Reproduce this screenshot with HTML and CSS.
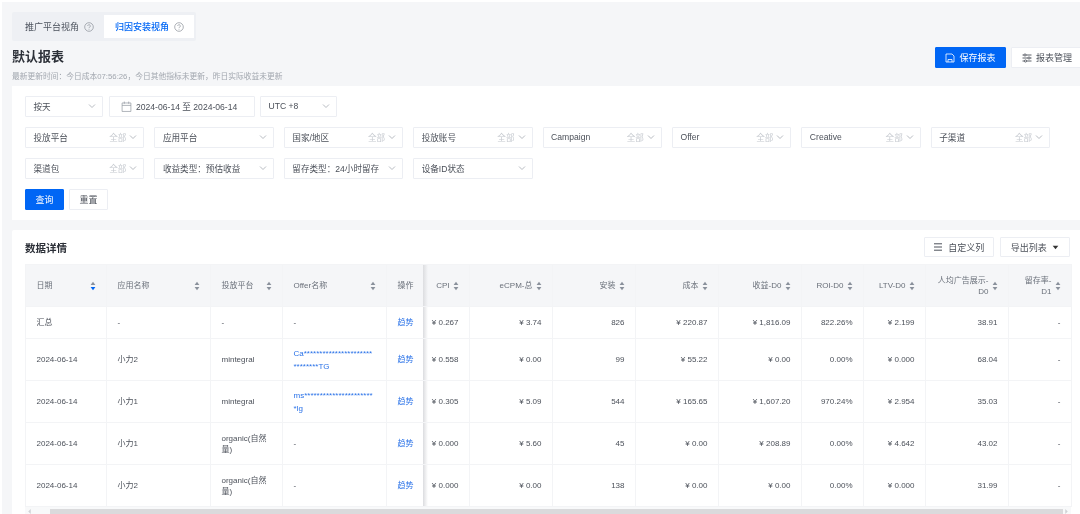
FILE: index.html
```html
<!DOCTYPE html>
<html lang="zh-CN">
<head>
<meta charset="utf-8">
<title>默认报表</title>
<link rel="stylesheet" href="styles.css">
</head>
<body>
<svg class="defs" width="0" height="0">
  <symbol id="chev" viewBox="0 0 8 8"><path d="M1 2.5 4 5.5 7 2.5" fill="none" stroke="currentColor" stroke-width=".8"/></symbol>
  <symbol id="sort" viewBox="0 0 6 10"><path d="M3 .8 5.4 4H.6Z" fill="currentColor"/><path d="M3 9.2 5.4 6H.6Z" fill="currentColor"/></symbol>
  <symbol id="sort-down" viewBox="0 0 6 10"><path d="M3 .8 5.4 4H.6Z" fill="#8a919c"/><path d="M3 9.2 5.4 6H.6Z" fill="#0066f5"/></symbol>
  <symbol id="help" viewBox="0 0 10 10"><circle cx="5" cy="5" r="4.3" fill="none" stroke="currentColor" stroke-width=".7"/><path d="M3.7 4a1.3 1.3 0 1 1 2 1.1c-.5.3-.7.5-.7 1" fill="none" stroke="currentColor" stroke-width=".7"/><circle cx="5" cy="7.3" r=".45" fill="currentColor"/></symbol>
</svg>
<div class="page">
  <div class="tabs">
    <div class="tab">推广平台视角<svg class="help"><use href="#help"/></svg></div>
    <div class="tab tab-active">归因安装视角<svg class="help"><use href="#help"/></svg></div>
  </div>
  <header class="head">
    <div>
      <h1 class="title">默认报表</h1>
      <p class="note">最新更新时间：今日成本07:56:26，今日其他指标未更新，昨日实际收益未更新</p>
    </div>
    <div class="head-actions">
      <button class="btn btn-primary btn-save">
        <svg class="ico" viewBox="0 0 10 10"><path d="M1 1h6l2 2v6H1Z M3 9V6.5h4V9" fill="none" stroke="currentColor" stroke-width=".8"/></svg>保存报表
      </button>
      <button class="btn btn-manage">
        <svg class="ico" viewBox="0 0 10 10"><path d="M.5 2h9M.5 5h9M.5 8h9" stroke="currentColor" stroke-width=".9"/><circle cx="3" cy="2" r="1.1" fill="#fff" stroke="currentColor" stroke-width=".8"/><circle cx="7" cy="5" r="1.1" fill="#fff" stroke="currentColor" stroke-width=".8"/><circle cx="3.5" cy="8" r="1.1" fill="#fff" stroke="currentColor" stroke-width=".8"/></svg>报表管理
      </button>
    </div>
  </header>

  <section class="filters">
    <div class="filter-row">
      <div class="sel sel-day"><span class="sel-label">按天</span><svg class="chev"><use href="#chev"/></svg></div>
      <div class="sel sel-date">
        <svg class="cal" viewBox="0 0 10 10"><path d="M1 1.8h8v7.7H1ZM1 4h8M3 .5v2M7 .5v2" fill="none" stroke="currentColor" stroke-width=".6"/></svg>
        <span class="sel-label">2024-06-14 至 2024-06-14</span>
      </div>
      <div class="sel sel-utc"><span class="sel-label">UTC +8</span><svg class="chev"><use href="#chev"/></svg></div>
    </div>
    <div class="filter-row">
      <div class="sel sel-f"><span class="sel-label">投放平台</span><span class="sel-all">全部</span><svg class="chev"><use href="#chev"/></svg></div>
      <div class="sel sel-f"><span class="sel-label">应用平台</span><svg class="chev"><use href="#chev"/></svg></div>
      <div class="sel sel-f"><span class="sel-label">国家/地区</span><span class="sel-all">全部</span><svg class="chev"><use href="#chev"/></svg></div>
      <div class="sel sel-f"><span class="sel-label">投放账号</span><span class="sel-all">全部</span><svg class="chev"><use href="#chev"/></svg></div>
      <div class="sel sel-f"><span class="sel-label">Campaign</span><span class="sel-all">全部</span><svg class="chev"><use href="#chev"/></svg></div>
      <div class="sel sel-f"><span class="sel-label">Offer</span><span class="sel-all">全部</span><svg class="chev"><use href="#chev"/></svg></div>
      <div class="sel sel-f"><span class="sel-label">Creative</span><span class="sel-all">全部</span><svg class="chev"><use href="#chev"/></svg></div>
      <div class="sel sel-f"><span class="sel-label">子渠道</span><span class="sel-all">全部</span><svg class="chev"><use href="#chev"/></svg></div>
    </div>
    <div class="filter-row">
      <div class="sel sel-f"><span class="sel-label">渠道包</span><span class="sel-all">全部</span><svg class="chev"><use href="#chev"/></svg></div>
      <div class="sel sel-f"><span class="sel-label">收益类型：预估收益</span><svg class="chev"><use href="#chev"/></svg></div>
      <div class="sel sel-f"><span class="sel-label">留存类型：24小时留存</span><svg class="chev"><use href="#chev"/></svg></div>
      <div class="sel sel-f"><span class="sel-label">设备ID状态</span><svg class="chev"><use href="#chev"/></svg></div>
    </div>
    <div class="filter-row filter-btns">
      <button class="btn btn-primary btn-q">查询</button>
      <button class="btn btn-q">重置</button>
    </div>
  </section>

  <section class="card">
    <div class="card-head">
      <h2 class="card-title">数据详情</h2>
      <div class="card-actions">
        <button class="btn btn-tool">
          <svg class="ico" viewBox="0 0 10 10"><path d="M1 1.8h8M1 5h8M1 8.2h8" stroke="currentColor" stroke-width="1"/></svg>自定义列
        </button>
        <button class="btn btn-tool">导出列表<svg class="caret" viewBox="0 0 8 8"><path d="M.8 2h6.4L4 6Z" fill="currentColor"/></svg></button>
      </div>
    </div>
    <div class="table-wrap">
      <table class="data">
        <colgroup>
          <col class="c-date"><col class="c-app"><col class="c-plat"><col class="c-offer"><col class="c-op">
          <col class="c-cpi"><col class="c-ecpm"><col class="c-inst"><col class="c-cost"><col class="c-rev">
          <col class="c-roi"><col class="c-ltv"><col class="c-ad"><col class="c-ret">
        </colgroup>
        <thead>
          <tr>
            <th><div class="th"><span>日期</span><svg class="sort"><use href="#sort-down"/></svg></div></th>
            <th><div class="th"><span>应用名称</span><svg class="sort"><use href="#sort"/></svg></div></th>
            <th><div class="th"><span>投放平台</span><svg class="sort"><use href="#sort"/></svg></div></th>
            <th><div class="th"><span>Offer名称</span><svg class="sort"><use href="#sort"/></svg></div></th>
            <th class="op"><div class="th"><span>操作</span></div></th>
            <th class="num"><div class="th"><span>CPI</span><svg class="sort"><use href="#sort"/></svg></div></th>
            <th class="num"><div class="th"><span>eCPM-总</span><svg class="sort"><use href="#sort"/></svg></div></th>
            <th class="num"><div class="th"><span>安装</span><svg class="sort"><use href="#sort"/></svg></div></th>
            <th class="num"><div class="th"><span>成本</span><svg class="sort"><use href="#sort"/></svg></div></th>
            <th class="num"><div class="th"><span>收益-D0</span><svg class="sort"><use href="#sort"/></svg></div></th>
            <th class="num"><div class="th"><span>ROI-D0</span><svg class="sort"><use href="#sort"/></svg></div></th>
            <th class="num"><div class="th"><span>LTV-D0</span><svg class="sort"><use href="#sort"/></svg></div></th>
            <th class="num th-ad"><div class="th"><span>人均广告展示-D0</span><svg class="sort"><use href="#sort"/></svg></div></th>
            <th class="num"><div class="th"><span>留存率-D1</span><svg class="sort"><use href="#sort"/></svg></div></th>
          </tr>
        </thead>
        <tbody>
          <tr class="r-sum">
            <td>汇总</td><td>-</td><td>-</td><td>-</td><td class="op"><a class="link">趋势</a></td>
            <td class="num">¥ 0.267</td><td class="num">¥ 3.74</td><td class="num">826</td><td class="num">¥ 220.87</td><td class="num">¥ 1,816.09</td><td class="num">822.26%</td><td class="num">¥ 2.199</td><td class="num">38.91</td><td class="num">-</td>
          </tr>
          <tr>
            <td>2024-06-14</td><td>小力2</td><td>mintegral</td><td><a class="link offer">Ca******************************TG</a></td><td class="op"><a class="link">趋势</a></td>
            <td class="num">¥ 0.558</td><td class="num">¥ 0.00</td><td class="num">99</td><td class="num">¥ 55.22</td><td class="num">¥ 0.00</td><td class="num">0.00%</td><td class="num">¥ 0.000</td><td class="num">68.04</td><td class="num">-</td>
          </tr>
          <tr>
            <td>2024-06-14</td><td>小力1</td><td>mintegral</td><td><a class="link offer">ms***********************lg</a></td><td class="op"><a class="link">趋势</a></td>
            <td class="num">¥ 0.305</td><td class="num">¥ 5.09</td><td class="num">544</td><td class="num">¥ 165.65</td><td class="num">¥ 1,607.20</td><td class="num">970.24%</td><td class="num">¥ 2.954</td><td class="num">35.03</td><td class="num">-</td>
          </tr>
          <tr>
            <td>2024-06-14</td><td>小力1</td><td>organic(自然量)</td><td>-</td><td class="op"><a class="link">趋势</a></td>
            <td class="num">¥ 0.000</td><td class="num">¥ 5.60</td><td class="num">45</td><td class="num">¥ 0.00</td><td class="num">¥ 208.89</td><td class="num">0.00%</td><td class="num">¥ 4.642</td><td class="num">43.02</td><td class="num">-</td>
          </tr>
          <tr>
            <td>2024-06-14</td><td>小力2</td><td>organic(自然量)</td><td>-</td><td class="op"><a class="link">趋势</a></td>
            <td class="num">¥ 0.000</td><td class="num">¥ 0.00</td><td class="num">138</td><td class="num">¥ 0.00</td><td class="num">¥ 0.00</td><td class="num">0.00%</td><td class="num">¥ 0.000</td><td class="num">31.99</td><td class="num">-</td>
          </tr>
        </tbody>
      </table>
      <div class="scrollbar">
        <svg class="sb-arrow" viewBox="0 0 3 6"><path d="M3 0V6L0 3Z" fill="currentColor"/></svg>
        <div class="thumb"></div>
        <svg class="sb-arrow" viewBox="0 0 3 6"><path d="M0 0V6L3 3Z" fill="currentColor"/></svg>
      </div>
    </div>
  </section>
</div>
</body>
</html>
```

FILE: styles.css
```css
* { box-sizing: border-box; }
html, body { margin: 0; height: 100%; overflow: hidden; }
body {
  background: #fff;
  font-family: "Liberation Sans", "Noto Sans CJK SC", sans-serif;
  font-size: 8px;
  color: #4c515a;
}
.defs { position: absolute; }
.page {
  margin: 2px 0 0 2px;
  height: 512px;
  background: #f5f6f8;
  padding-left: 10px;
  padding-top: 10px;
  overflow: hidden;
  filter: blur(.3px);
}
.tabs {
  display: inline-flex;
  width: 184px;
  height: 29px;
  padding: 3px 2px 3px 0;
  background: #eef0f4;
  border-radius: 2px;
  vertical-align: top;
}
.tab {
  width: 92px;
  padding-left: 13px;
  display: flex;
  align-items: center;
  gap: 5px;
  font-size: 9px;
  color: #4d535e;
}
.tab-active {
  width: 90px;
  padding-left: 11px;
  background: #fff;
  color: #0066f5;
  font-weight: 500;
}
.help { width: 10px; height: 10px; color: #8a8f98; }
.head {
  height: 45px;
  display: flex;
  justify-content: space-between;
}
.title {
  margin: 8px 0 0;
  font-size: 13px;
  line-height: 16px;
  font-weight: 700;
  color: #2c3038;
}
.note {
  margin: 7px 0 0;
  font-size: 7.75px;
  line-height: 10px;
  color: #a2a7af;
}
.head-actions {
  display: flex;
  gap: 5px;
  padding-top: 6px;
}
.btn {
  height: 21px;
  padding: 0;
  display: inline-flex;
  align-items: center;
  justify-content: center;
  background: #fff;
  border: 1px solid #eceef3;
  border-radius: 1px;
  font: inherit;
  font-size: 9px;
  color: #4c515a;
}
.btn-primary { background: #0066f5; border-color: #0066f5; color: #fff; }
.btn-save { width: 71px; gap: 4px; }
.btn-manage { width: 72px; gap: 4px; margin-right: -3px; }
.ico { width: 10px; height: 10px; flex: none; }
.filters {
  background: #fff;
  padding: 10px 13px;
  display: flex;
  flex-direction: column;
  gap: 10px;
  height: 134px;
}
.filter-row { display: flex; gap: 10px; }
.sel {
  height: 21px;
  background: #fff;
  border: 1px solid #eceef3;
  border-radius: 1px;
  display: flex;
  align-items: center;
  padding: 0 6px 1px 7.5px;
  font-size: 8.6px;
  color: #4c515a;
}
.sel-label { flex: 1; white-space: nowrap; }
.sel-all { color: #c6cad0; margin-right: 3px; }
.chev { width: 8px; height: 8px; color: #a4a9b1; flex: none; }
.sel-f { width: 119.4px; }
.sel-day { width: 78px; }
.sel-date { width: 145.5px; margin-left: -4px; gap: 4px; padding-left: 11px; }
.sel-utc { width: 77px; margin-left: -4.5px; }
.cal { width: 11px; height: 11px; color: #8a8f98; flex: none; }
.filter-btns { gap: 5px; }
.btn-q { width: 39px; }
.card {
  margin-top: 10px;
  background: #fff;
  padding: 7px 9px 0 13px;
  height: 300px;
  border-radius: 2px 0 0 0;
}
.card-head {
  height: 27px;
  display: flex;
  justify-content: space-between;
}
.card-title {
  margin: 3px 0 0;
  font-size: 10.5px;
  line-height: 16px;
  font-weight: 700;
  color: #2c3038;
}
.card-actions { display: flex; gap: 5.5px; margin-right: 1px; }
.btn-tool { width: 70.5px; height: 20px; gap: 5px; }
.caret { width: 7px; height: 7px; color: #333; }
.table-wrap { position: relative; }
.data {
  table-layout: fixed;
  border-collapse: collapse;
  width: 1046px;
  border: 1px solid #f3f4f6;
}
.c-date { width: 81px; } .c-app { width: 104px; } .c-plat { width: 72px; } .c-offer { width: 104px; }
.c-op { width: 37px; } .c-cpi { width: 46px; } .c-ecpm { width: 83px; } .c-inst { width: 83px; }
.c-cost { width: 83px; } .c-rev { width: 83px; } .c-roi { width: 62px; } .c-ltv { width: 62px; }
.c-ad { width: 83px; } .c-ret { width: 63px; }
th, td {
  border: 1px solid #f3f4f6;
  padding: 0 10.5px;
  font-weight: 400;
  text-align: left;
  line-height: 11px;
}
thead tr { height: 42px; }
tbody tr { height: 42px; }
tbody tr.r-sum { height: 32px; }
th { background: #f5f6f8; color: #6a707a; }
td { color: #4c515a; }
.op { position: relative; padding-right: 0; }
.op::after {
  content: "";
  position: absolute;
  top: 0;
  bottom: 0;
  right: -5px;
  width: 5px;
  background: linear-gradient(to right, #dcdde0, rgba(255, 255, 255, 0));
}
.th { display: flex; justify-content: space-between; align-items: center; gap: 3px; }
td.num { text-align: right; white-space: nowrap; padding-left: 6px; }
.num .th { justify-content: flex-end; text-align: right; }
.th-ad { padding-left: 9px; }
.sort { width: 6px; height: 10px; color: #8a919c; flex: none; }
.link { color: #2a72e8; }
.offer { display: block; width: 81px; word-break: break-all; line-height: 13px; }
.scrollbar {
  height: 8px;
  background: #f8f9fa;
  display: flex;
  align-items: center;
  padding: 0 3px;
  color: #d0d2d6;
}
.sb-arrow { width: 3px; height: 5px; flex: none; }
.thumb { flex: 1; height: 5px; margin: 1px 2px 0 19px; background: #dadadc; }
```
